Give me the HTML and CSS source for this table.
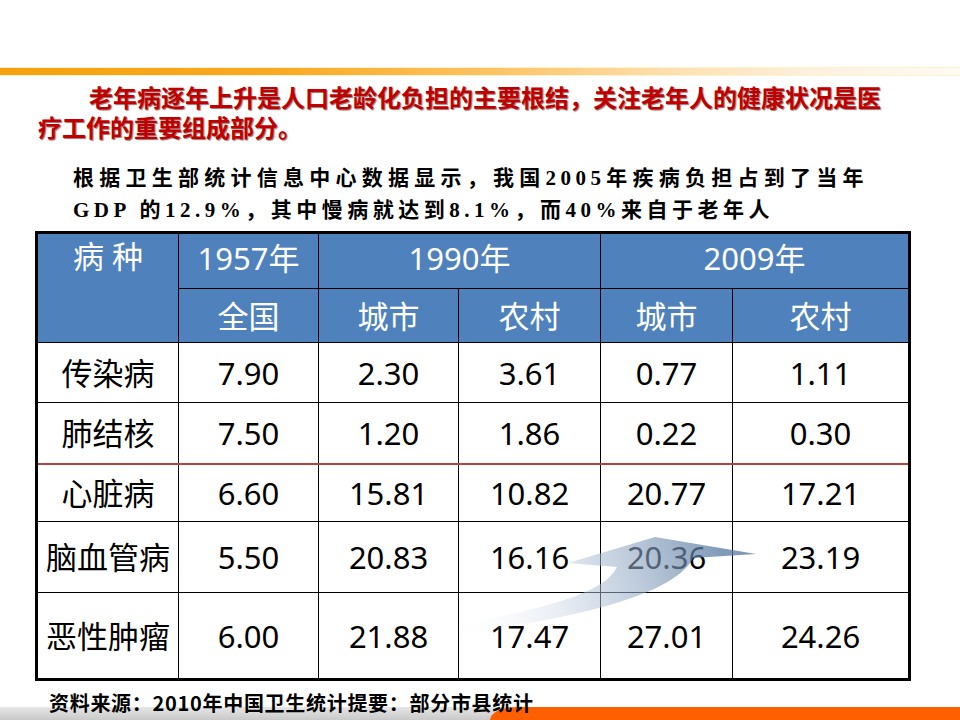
FILE: index.html
```html
<!DOCTYPE html>
<html lang="zh-CN">
<head>
<meta charset="utf-8">
<title>老年病</title>
<link rel="stylesheet" href="styles.css">
</head>
<body>
<div class="slide">
  <div class="topbar"></div>
  <h1 class="title">
    <span class="title-line first">老年病逐年上升是人口老龄化负担的主要根结，关注老年人的健康状况是医</span>
    <span class="title-line">疗工作的重要组成部分。</span>
  </h1>
  <div class="lead">
    <div class="lead-line justified">根据卫生部统计信息中心数据显示，我国2005年疾病负担占到了当年</div>
    <div class="lead-line">GDP 的12.9%，其中慢病就达到8.1%，而40%来自于老年人</div>
  </div>
  <table class="data">
    <colgroup>
      <col class="c1"><col class="c2"><col class="c3"><col class="c4"><col class="c5"><col class="c6">
    </colgroup>
    <thead>
      <tr class="h1row">
        <th rowspan="2" class="corner">病 种</th>
        <th>1957年</th>
        <th colspan="2">1990年</th>
        <th colspan="2">2009年</th>
      </tr>
      <tr class="h2row">
        <th>全国</th>
        <th>城市</th>
        <th>农村</th>
        <th>城市</th>
        <th>农村</th>
      </tr>
    </thead>
    <tbody>
      <tr class="r1"><td>传染病</td><td>7.90</td><td>2.30</td><td>3.61</td><td>0.77</td><td>1.11</td></tr>
      <tr class="r2 split"><td>肺结核</td><td>7.50</td><td>1.20</td><td>1.86</td><td>0.22</td><td>0.30</td></tr>
      <tr class="r3"><td>心脏病</td><td>6.60</td><td>15.81</td><td>10.82</td><td>20.77</td><td>17.21</td></tr>
      <tr class="r4"><td>脑血管病</td><td>5.50</td><td>20.83</td><td>16.16</td><td>20.36</td><td>23.19</td></tr>
      <tr class="r5"><td>恶性肿瘤</td><td>6.00</td><td>21.88</td><td>17.47</td><td>27.01</td><td>24.26</td></tr>
    </tbody>
  </table>
  <p class="source">资料来源：2010年中国卫生统计提要：部分市县统计</p>

  <div class="bottom-band"><div class="band-orange"></div></div>

  <svg class="arrow" width="960" height="720" viewBox="0 0 960 720" aria-hidden="true">
    <defs>
      <linearGradient id="arrowGrad" gradientUnits="userSpaceOnUse" x1="450" y1="630" x2="720" y2="545">
        <stop offset="0" stop-color="#ffffff" stop-opacity="0"/>
        <stop offset="0.5" stop-color="#b4c4d9" stop-opacity="0.5"/>
        <stop offset="1" stop-color="#56789f" stop-opacity="0.75"/>
      </linearGradient>
    </defs>
    <path d="M 568 563 L 655 537 L 756 554 L 693 558 C 680 585 620 612 462 634 L 440 628 C 560 607 606 590 617 567 Z" fill="url(#arrowGrad)"/>
  </svg>
</div>
</body>
</html>
```

FILE: styles.css
```css
html, body {
  margin: 0;
  padding: 0;
  background: #ffffff;
}

.slide {
  position: relative;
  width: 960px;
  height: 720px;
  overflow: hidden;
  font-family: "Noto Sans", "Noto Sans CJK SC", sans-serif;
  color: #000;
}

.topbar {
  margin-top: 68px;
  height: 7px;
  background: linear-gradient(to right, #f6a00c 0%, #f9ab24 30%, #fdc466 52%, #fde0b0 70%, #fdf1df 85%, #fffaf4 100%);
  box-shadow: 0 -1px 0 #fff2cc, 0 1px 0 #fff2cc;
}

.title {
  margin: 7px 0 0 38px;
  font-family: "Noto Sans CJK SC", sans-serif;
  font-size: 24px;
  line-height: 30px;
  font-weight: 700;
  color: #c00000;
  text-shadow: 1px 1px 1px rgba(60, 0, 0, 0.55);
}

.title-line {
  display: block;
}

.title-line.first {
  padding-left: 51px;
}

.lead {
  margin: 20px 0 0 73px;
  width: 795px;
  font-family: "Liberation Serif", "Noto Sans CJK SC", serif;
  font-weight: 700;
  font-size: 21px;
  line-height: 32px;
  letter-spacing: 4.5px;
  color: #000;
}

.lead-line.justified {
  text-align: justify;
  text-align-last: justify;
}

.data {
  margin: 5px 0 0 35px;
  width: 873px;
  table-layout: fixed;
  border-collapse: collapse;
  border: 3px solid #000;
  font-size: 31px;
}

.c1 { width: 142px; }
.c2 { width: 140px; }
.c3 { width: 140px; }
.c4 { width: 142px; }
.c5 { width: 132px; }
.c6 { width: 177px; }

.data th,
.data td {
  border: 1px solid #000;
  padding: 0;
  text-align: center;
  vertical-align: middle;
  font-weight: 400;
  line-height: 40px;
}

.data th {
  background: #4f81bd;
  color: #fff;
}

.data th.corner {
  vertical-align: top;
  padding-top: 2px;
}

.h1row { height: 56px; }
.h1row th { padding-bottom: 6px; }
.h2row { height: 54px; }
.r1 { height: 60px; }
.r2 { height: 61px; }
.r3 { height: 58px; }
.r4 { height: 71px; }
.r5 { height: 87px; }

.data tr.split td {
  border-bottom: 2px solid #b4433f;
}

.source {
  margin: 10px 0 0 49px;
  font-family: "Noto Sans CJK SC", sans-serif;
  font-size: 20px;
  line-height: 24px;
  font-weight: 700;
  letter-spacing: 0.7px;
  position: relative;
  z-index: 2;
}

.bottom-band {
  position: absolute;
  left: 0;
  right: 0;
  bottom: 0;
  height: 13px;
  background: linear-gradient(to bottom, #e6e6e6, #c9c9c9);
  z-index: 1;
}

.band-orange {
  position: absolute;
  left: 490px;
  right: 0;
  top: 0;
  bottom: 0;
  background: #fe5f00;
  border-top-left-radius: 26px 13px;
}

.arrow {
  position: absolute;
  left: 0;
  top: 0;
  pointer-events: none;
  z-index: 3;
}
```
